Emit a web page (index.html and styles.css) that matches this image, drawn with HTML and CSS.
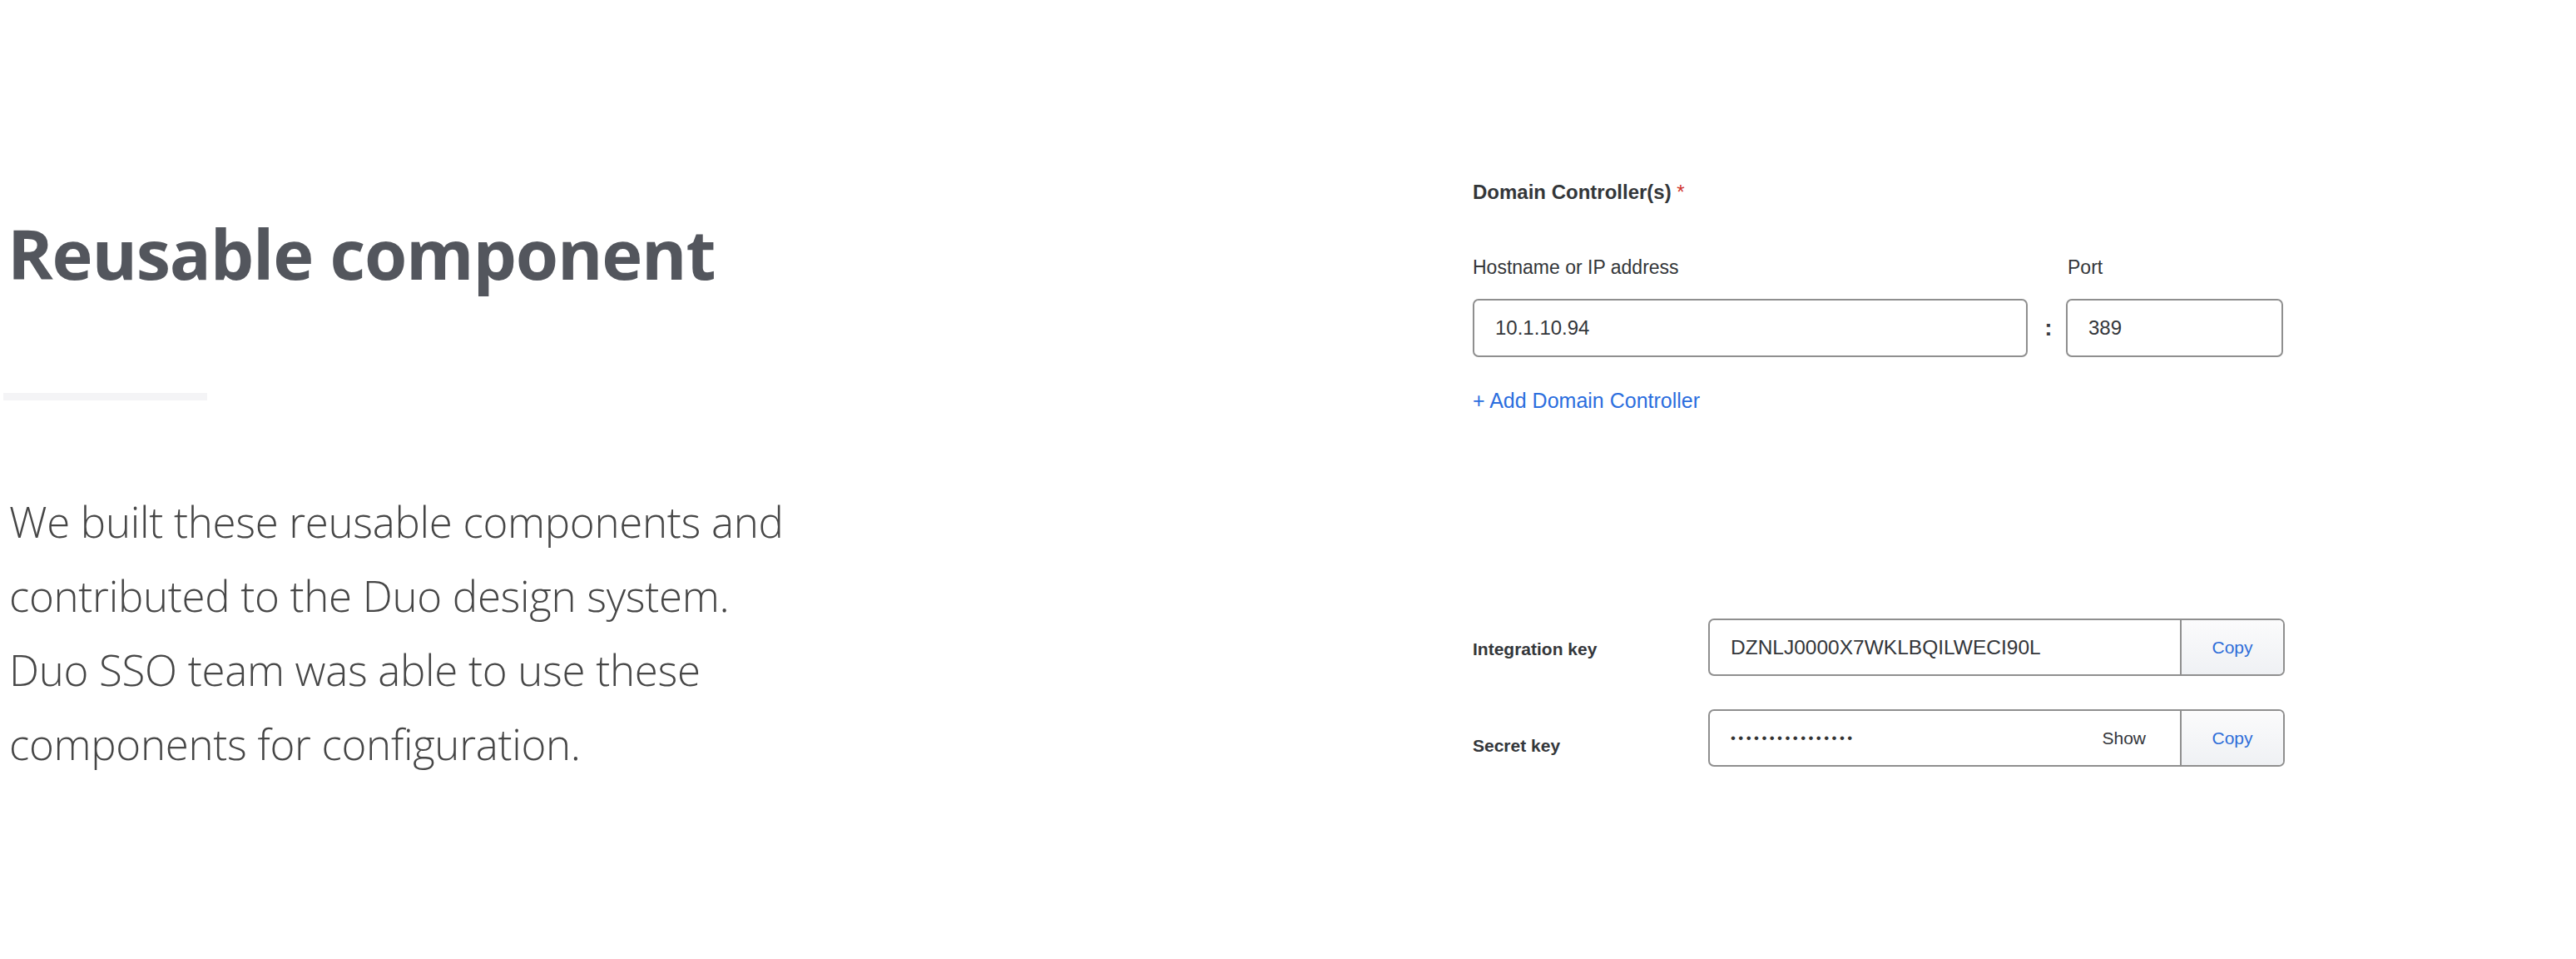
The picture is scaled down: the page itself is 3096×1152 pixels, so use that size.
FILE: index.html
```html
<!DOCTYPE html>
<html lang="en">
<head>
<meta charset="utf-8">
<title>Reusable component</title>
<link rel="stylesheet" href="styles.css">
</head>
<body>
<main class="page">
  <section class="intro">
    <h1 class="intro-title">Reusable component</h1>
    <div class="intro-rule"></div>
    <p class="intro-text">We built these reusable components and<br>contributed to the Duo design system.<br>Duo SSO team was able to use these<br>components for configuration.</p>
  </section>

  <section class="demo">
    <div class="dc-form">
      <div class="dc-title">Domain Controller(s) <span class="required">*</span></div>
      <div class="dc-grid">
        <div class="field-label">Hostname or IP address</div>
        <div></div>
        <div class="field-label field-label-port">Port</div>
        <div class="text-field">10.1.10.94</div>
        <div class="colon">:</div>
        <div class="text-field">389</div>
      </div>
      <a class="add-link" href="#">+ Add Domain Controller</a>
    </div>

    <div class="keys">
      <div class="key-row">
        <div class="key-label">Integration key</div>
        <div class="key-field">
          <div class="key-value">DZNLJ0000X7WKLBQILWECI90L</div>
          <div class="key-copy">Copy</div>
        </div>
      </div>
      <div class="key-row">
        <div class="key-label key-label-secret">Secret key</div>
        <div class="key-field">
          <div class="key-value key-value-secret"><span class="dots">••••••••••••••••</span><span class="key-show">Show</span></div>
          <div class="key-copy">Copy</div>
        </div>
      </div>
    </div>
  </section>
</main>
</body>
</html>
```

FILE: styles.css
```css
* { box-sizing: border-box; }

html, body {
  margin: 0;
  background: #ffffff;
}

.page {
  display: grid;
  grid-template-columns: 1766px 976px;
  padding-left: 4px;
  width: 3096px;
  height: 1152px;
}

/* Left column */
.intro {
  padding-top: 254px;
}

.intro-title {
  margin: 0;
  font-family: "Open Sans", "Liberation Sans", sans-serif;
  font-weight: 700;
  font-size: 83px;
  letter-spacing: -1.2px;
  line-height: 100px;
  color: #53565d;
  padding-left: 5px;
}

.intro-rule {
  margin-top: 118px;
  width: 245px;
  height: 9px;
  background: #f4f4f6;
}

.intro-text {
  margin: 101px 0 0;
  font-family: "Open Sans", "Liberation Sans", sans-serif;
  font-weight: 300;
  font-size: 51px;
  letter-spacing: -0.3px;
  line-height: 89px;
  color: #464646;
  padding-left: 7px;
}

/* Right column */
.demo {
  font-family: "Liberation Sans", Arial, Helvetica, sans-serif;
  color: #333639;
}

.dc-form {
  padding-top: 216px;
}

.dc-title {
  font-size: 24px;
  font-weight: 700;
  line-height: 30px;
}

.required {
  color: #d0352d;
  font-weight: 400;
}

.dc-grid {
  display: grid;
  grid-template-columns: 667px 46px 261px;
  grid-template-rows: 30px 70px;
  row-gap: 23px;
  margin-top: 60px;
  width: 976px;
}

.field-label {
  font-size: 23px;
  line-height: 30px;
}

.field-label-port {
  padding-left: 2px;
}

.text-field {
  display: flex;
  align-items: center;
  height: 70px;
  padding-left: 25px;
  border: 2px solid #8f8f8f;
  border-radius: 7px;
  font-size: 24px;
  color: #33363a;
  background: #fff;
}

.colon {
  display: flex;
  align-items: center;
  justify-content: center;
  padding-left: 4px;
  font-size: 28px;
  font-weight: 700;
  color: #3a3d40;
}

.add-link {
  display: block;
  margin-top: 37px;
  font-size: 25px;
  line-height: 30px;
  color: #2b6ede;
  text-decoration: none;
}

.keys {
  margin-top: 247px;
  display: flex;
  flex-direction: column;
  gap: 40px;
}

.key-row {
  display: flex;
  align-items: flex-start;
}

.key-label {
  width: 283px;
  padding-top: 25px;
  font-size: 21px;
  line-height: 24px;
  font-weight: 700;
  color: #33363a;
}

.key-label-secret {
  padding-top: 32px;
}

.key-field {
  display: flex;
  width: 693px;
  height: 69px;
  border: 2px solid #8f8f8f;
  border-radius: 7px;
  overflow: hidden;
}

.key-value {
  flex: 1;
  display: flex;
  align-items: center;
  padding-left: 25px;
  font-size: 24.5px;
  color: #33363a;
}

.key-value-secret {
  justify-content: space-between;
  padding-right: 41px;
}

.dots {
  font-size: 17px;
  letter-spacing: 3.4px;
  color: #333;
}

.key-show {
  font-size: 21px;
  color: #33363a;
}

.key-copy {
  width: 124px;
  display: flex;
  align-items: center;
  justify-content: center;
  border-left: 2px solid #8f8f8f;
  background: linear-gradient(#fbfbfc, #eff1f4);
  font-size: 21px;
  color: #2d6dd8;
}
```
